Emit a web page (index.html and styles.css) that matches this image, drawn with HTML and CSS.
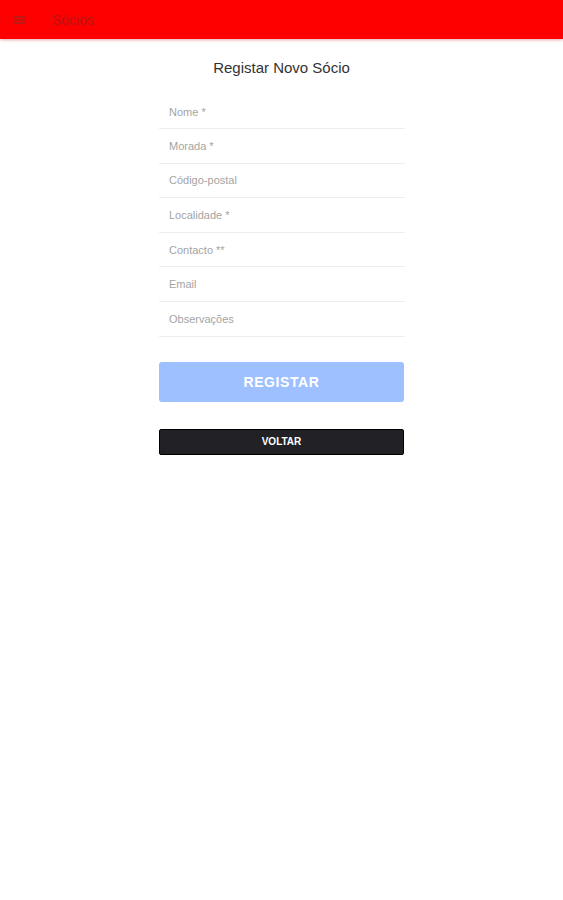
FILE: index.html
```html
<!DOCTYPE html>
<html lang="pt">
<head>
<meta charset="utf-8">
<title>Sócios</title>
<link rel="stylesheet" href="styles.css">
</head>
<body>
<header class="topbar">
  <svg class="menu-icon" width="12" height="8" viewBox="0 0 12 8"><rect x="0" y="0" width="12" height="1.6" fill="currentColor"/><rect x="0" y="3.2" width="12" height="1.6" fill="currentColor"/><rect x="0" y="6.4" width="12" height="1.6" fill="currentColor"/></svg>
  <span class="topbar-title">Sócios</span>
</header>
<main class="content">
  <h1 class="page-title">Registar Novo Sócio</h1>
  <form class="form">
    <div class="field">Nome *</div>
    <div class="field">Morada *</div>
    <div class="field">Código-postal</div>
    <div class="field">Localidade *</div>
    <div class="field">Contacto **</div>
    <div class="field">Email</div>
    <div class="field">Observações</div>
    <button type="button" class="btn-primary">REGISTAR</button>
    <button type="button" class="btn-dark">VOLTAR</button>
  </form>
</main>
</body>
</html>
```

FILE: styles.css
```css
* { box-sizing: border-box; }
html, body { margin: 0; padding: 0; background: #fff; }
body { font-family: Roboto, "Liberation Sans", Arial, sans-serif; }

.topbar {
  height: 39px;
  background: #ff0000;
  display: flex;
  align-items: center;
  padding-left: 14px;
  box-shadow: 0 1px 3px rgba(200, 0, 0, 0.35);
  color: #a31c1c;
}
.menu-icon { display: block; color: #9e2424; opacity: 0.75; }
.topbar-title {
  margin-left: 26px;
  font-size: 14px;
  color: #a31c1c;
  opacity: 0.75;
  font-family: "Liberation Sans", Arial, sans-serif;
}

.content {
  display: flex;
  flex-direction: column;
  align-items: center;
}
.page-title {
  margin: 19px 0 0;
  font-size: 15px;
  font-weight: normal;
  color: #333;
  font-family: "Liberation Sans", Arial, sans-serif;
  line-height: 20px;
}

.form {
  width: 246px;
  margin-top: 18px;
  display: flex;
  flex-direction: column;
  margin-left: 1px;
}
.field {
  height: 34.6px;
  border-bottom: 1px solid #eeeeee;
  padding-left: 10px;
  display: flex;
  align-items: center;
  font-size: 11px;
  color: #a4a4a4;
  font-family: "Liberation Sans", Arial, sans-serif;
}
.field:first-child { height: 33px; }

.btn-primary {
  margin-top: 25px;
  height: 40px;
  width: 245px;
  border: none;
  border-radius: 3px;
  background: #9ec0ff;
  color: #fff;
  font-size: 14px;
  font-weight: bold;
  letter-spacing: 0.6px;
  font-family: "Liberation Sans", Arial, sans-serif;
  padding: 0;
}
.btn-dark {
  margin-top: 27px;
  height: 26px;
  width: 245px;
  border: 1px solid #000;
  border-radius: 2px;
  background: #222226;
  color: #fff;
  font-size: 10px;
  font-weight: bold;
  font-family: "Liberation Sans", Arial, sans-serif;
  padding: 0;
}
```
